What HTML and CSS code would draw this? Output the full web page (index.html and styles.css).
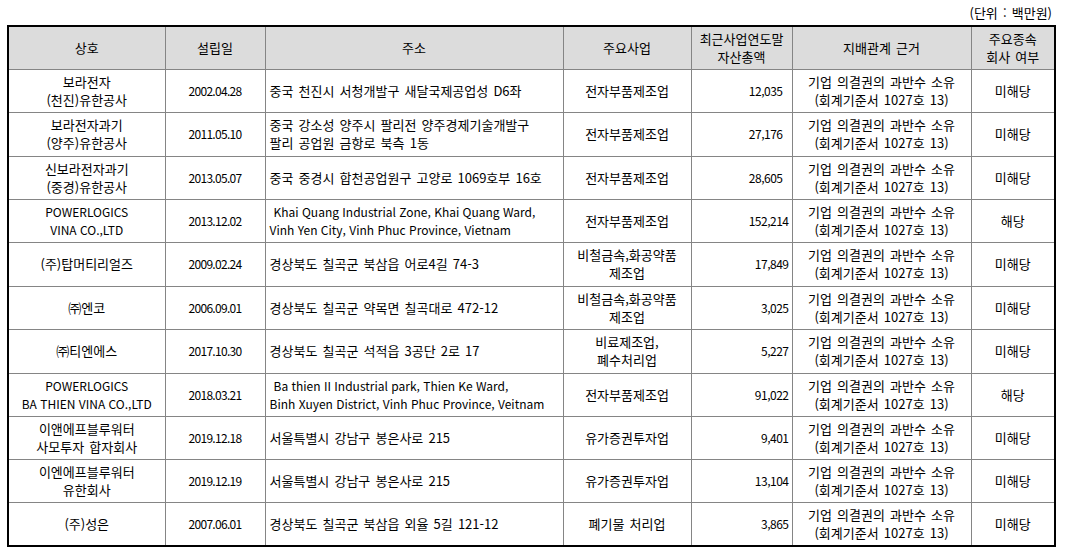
FILE: index.html
```html
<!DOCTYPE html>
<html lang="ko">
<head>
<meta charset="utf-8">
<link rel="stylesheet" href="styles.css">
</head>
<body>
<div class="page">
  <div class="unit">(단위 : 백만원)</div>
  <table class="grid">
    <colgroup>
      <col class="c1"><col class="c2"><col class="c3"><col class="c4"><col class="c5"><col class="c6"><col class="c7">
    </colgroup>
    <thead>
      <tr class="h43">
        <th>상호</th>
        <th>설립일</th>
        <th>주소</th>
        <th>주요사업</th>
        <th>최근사업연도말<br>자산총액</th>
        <th>지배관계 근거</th>
        <th>주요종속<br>회사 여부</th>
      </tr>
    </thead>
    <tbody>
      <tr class="h43">
        <td>보라전자<br>(천진)유한공사</td>
        <td class="date">2002.04.28</td>
        <td class="addr">중국 천진시 서청개발구 새달국제공업성 D6좌</td>
        <td>전자부품제조업</td>
        <td class="num pad">12,035</td>
        <td>기업 의결권의 과반수 소유<br>(회계기준서 1027호 13)</td>
        <td>미해당</td>
      </tr>
      <tr class="h44">
        <td>보라전자과기<br>(양주)유한공사</td>
        <td class="date">2011.05.10</td>
        <td class="addr">중국 강소성 양주시 팔리전 양주경제기술개발구<br>팔리 공업원 금항로 북측 1동</td>
        <td>전자부품제조업</td>
        <td class="num pad">27,176</td>
        <td>기업 의결권의 과반수 소유<br>(회계기준서 1027호 13)</td>
        <td>미해당</td>
      </tr>
      <tr class="h43">
        <td>신보라전자과기<br>(중경)유한공사</td>
        <td class="date">2013.05.07</td>
        <td class="addr">중국 중경시 합천공업원구 고양로 1069호부 16호</td>
        <td>전자부품제조업</td>
        <td class="num pad">28,605</td>
        <td>기업 의결권의 과반수 소유<br>(회계기준서 1027호 13)</td>
        <td>미해당</td>
      </tr>
      <tr class="h43">
        <td class="en">POWERLOGICS<br>VINA CO.,LTD</td>
        <td class="date">2013.12.02</td>
        <td class="addr en"><span class="lead">Khai Quang Industrial Zone, Khai Quang Ward,</span><br>Vinh Yen City, Vinh Phuc Province, Vietnam</td>
        <td>전자부품제조업</td>
        <td class="num">152,214</td>
        <td>기업 의결권의 과반수 소유<br>(회계기준서 1027호 13)</td>
        <td>해당</td>
      </tr>
      <tr class="h44">
        <td>(주)탑머티리얼즈</td>
        <td class="date">2009.02.24</td>
        <td class="addr">경상북도 칠곡군 북삼읍 어로4길 74-3</td>
        <td>비철금속,화공약품<br>제조업</td>
        <td class="num">17,849</td>
        <td>기업 의결권의 과반수 소유<br>(회계기준서 1027호 13)</td>
        <td>미해당</td>
      </tr>
      <tr class="h43">
        <td>㈜엔코</td>
        <td class="date">2006.09.01</td>
        <td class="addr">경상북도 칠곡군 약목면 칠곡대로 472-12</td>
        <td>비철금속,화공약품<br>제조업</td>
        <td class="num">3,025</td>
        <td>기업 의결권의 과반수 소유<br>(회계기준서 1027호 13)</td>
        <td>미해당</td>
      </tr>
      <tr class="h44">
        <td>㈜티엔에스</td>
        <td class="date">2017.10.30</td>
        <td class="addr">경상북도 칠곡군 석적읍 3공단 2로 17</td>
        <td>비료제조업,<br>폐수처리업</td>
        <td class="num">5,227</td>
        <td>기업 의결권의 과반수 소유<br>(회계기준서 1027호 13)</td>
        <td>미해당</td>
      </tr>
      <tr class="h43">
        <td class="en">POWERLOGICS<br>BA THIEN VINA CO.,LTD</td>
        <td class="date">2018.03.21</td>
        <td class="addr en"><span class="lead">Ba thien II Industrial park, Thien Ke Ward,</span><br>Binh Xuyen District, Vinh Phuc Province, Veitnam</td>
        <td>전자부품제조업</td>
        <td class="num">91,022</td>
        <td>기업 의결권의 과반수 소유<br>(회계기준서 1027호 13)</td>
        <td>해당</td>
      </tr>
      <tr class="h43">
        <td>이앤에프블루워터<br>사모투자 합자회사</td>
        <td class="date">2019.12.18</td>
        <td class="addr">서울특별시 강남구 봉은사로 215</td>
        <td>유가증권투자업</td>
        <td class="num">9,401</td>
        <td>기업 의결권의 과반수 소유<br>(회계기준서 1027호 13)</td>
        <td>미해당</td>
      </tr>
      <tr class="h43">
        <td>이엔에프블루워터<br>유한회사</td>
        <td class="date">2019.12.19</td>
        <td class="addr">서울특별시 강남구 봉은사로 215</td>
        <td>유가증권투자업</td>
        <td class="num">13,104</td>
        <td>기업 의결권의 과반수 소유<br>(회계기준서 1027호 13)</td>
        <td>미해당</td>
      </tr>
      <tr class="h44">
        <td>(주)성은</td>
        <td class="date">2007.06.01</td>
        <td class="addr">경상북도 칠곡군 북삼읍 외율 5길 121-12</td>
        <td>폐기물 처리업</td>
        <td class="num">3,865</td>
        <td>기업 의결권의 과반수 소유<br>(회계기준서 1027호 13)</td>
        <td>미해당</td>
      </tr>
    </tbody>
  </table>
</div>
</body>
</html>
```

FILE: styles.css
```css
html, body {
  margin: 0;
  padding: 0;
  background: #ffffff;
}

body {
  font-family: "Noto Sans CJK KR", "Noto Sans", sans-serif;
  font-size: 13px;
  color: #000000;
  word-spacing: 1.5px;
}

.page {
  padding: 5px 20px 0 7px;
}

.unit {
  text-align: right;
  line-height: 16px;
  height: 16px;
  padding-right: 2px;
  margin-bottom: 4px;
}

.grid {
  border-collapse: collapse;
  table-layout: fixed;
  width: 1047px;
  border: 2px solid #000000;
}

.c1 { width: 157px; }
.c2 { width: 100px; }
.c3 { width: 298px; }
.c4 { width: 128px; }
.c5 { width: 101px; }
.c6 { width: 179px; }
.c7 { width: 84px; }

.grid th,
.grid td {
  border: 1px solid #858585;
  padding: 0 2px;
  text-align: center;
  vertical-align: middle;
  line-height: 18px;
  font-weight: normal;
  white-space: nowrap;
  overflow: hidden;
}

.grid th {
  background: #dcdcdc;
}

.h43 { height: 43px; }
.h44 { height: 44px; }

.grid td.addr {
  text-align: left;
  padding-left: 4px;
}

.grid td.en {
  font-size: 12px;
  word-spacing: 0;
}

.lead {
  padding-left: 4px;
}

.grid td.date {
  font-size: 12px;
  letter-spacing: -0.7px;
}

.grid td.num {
  font-size: 12px;
  text-align: right;
  padding-right: 3px;
  letter-spacing: -0.5px;
}

.grid td.num.pad {
  padding-right: 9px;
}
```
